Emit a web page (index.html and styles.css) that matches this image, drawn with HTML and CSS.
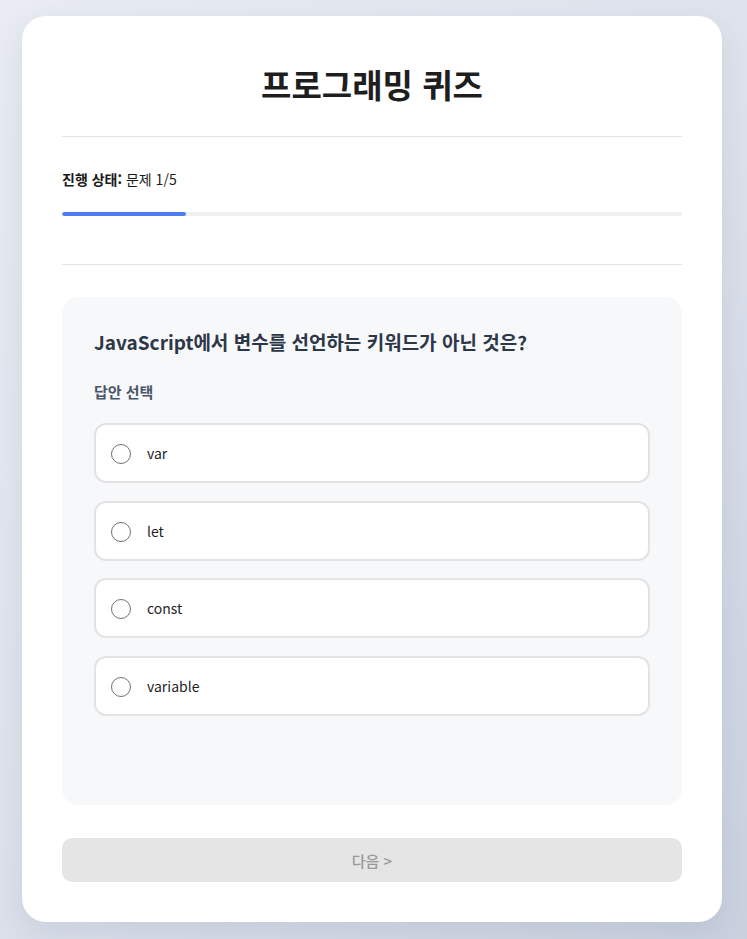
FILE: index.html
```html
<!DOCTYPE html>
<html lang="ko">
<head>
<meta charset="utf-8">
<title>프로그래밍 퀴즈</title>
<link rel="stylesheet" href="styles.css">
</head>
<body>
<main class="card">
  <header class="header">
    <h1 class="title">프로그래밍 퀴즈</h1>
  </header>
  <section class="progress">
    <p class="progress-text"><strong>진행 상태:</strong> 문제 1/5</p>
    <div class="bar"><div class="bar-fill" style="width: 20%"></div></div>
  </section>
  <section class="question">
    <h2 class="question-title">JavaScript에서 변수를 선언하는 키워드가 아닌 것은?</h2>
    <p class="label">답안 선택</p>
    <div class="options">
      <label class="option"><span class="radio"></span><span class="option-text">var</span></label>
      <label class="option"><span class="radio"></span><span class="option-text">let</span></label>
      <label class="option"><span class="radio"></span><span class="option-text">const</span></label>
      <label class="option"><span class="radio"></span><span class="option-text">variable</span></label>
    </div>
  </section>
  <button class="next" disabled>다음 &gt;</button>
</main>
</body>
</html>
```
FILE: styles.css
```css
* { box-sizing: border-box; }
html, body { margin: 0; padding: 0; }
body {
  min-height: 100vh;
  display: flex;
  align-items: center;
  justify-content: center;
  padding-right: 3px;
  padding-bottom: 1px;
  background: linear-gradient(135deg, #e9ecf3 0%, #dde2ec 50%, #c9d1df 100%);
  font-family: "Noto Sans CJK KR", "Noto Sans", sans-serif;
  color: #222;
}
.card {
  width: 700px;
  background: #fff;
  border-radius: 24px;
  padding: 40px 40px 40px;
  box-shadow: 0 10px 30px rgba(60, 70, 100, 0.10);
}
.header {
  padding: 4px 0 28px;
  border-bottom: 1px solid #e4e4e4;
}
.title {
  margin: 0;
  text-align: center;
  font-size: 33px;
  line-height: 48px;
  font-weight: 700;
  color: #1e1e1e;
}
.progress {
  padding: 32px 0 48px;
  border-bottom: 1px solid #e4e4e4;
}
.progress-text {
  margin: 0;
  font-size: 14px;
  line-height: 21px;
  color: #1a1a1a;
}
.progress-text strong { font-weight: 700; }
.bar {
  margin-top: 22px;
  height: 4px;
  background: #f0f0f3;
  border-radius: 2px;
  overflow: hidden;
}
.bar-fill {
  height: 100%;
  background: #4d7ef0;
  border-radius: 2px;
}
.question {
  margin-top: 32px;
  background: #f7f8fa;
  border-radius: 16px;
  padding: 30px 32px 32px;
  min-height: 508px;
}
.question-title {
  margin: 0;
  font-size: 19px;
  line-height: 30px;
  font-weight: 600;
  color: #2d3748;
}
.label {
  margin: 24px 0 0;
  font-size: 15px;
  line-height: 22px;
  font-weight: 600;
  color: #4a5568;
}
.options {
  margin-top: 20px;
  display: flex;
  flex-direction: column;
  gap: 17.5px;
}
.option {
  display: flex;
  align-items: center;
  height: 60px;
  padding: 0 15px;
  background: #fff;
  border: 2px solid #e3e3e3;
  border-radius: 12px;
}
.radio {
  width: 20px;
  height: 20px;
  border: 1px solid #707070;
  border-radius: 50%;
  background: #fff;
  flex: none;
  margin-top: 2px;
}
.option-text {
  margin-left: 16px;
  font-size: 14px;
  color: #1e1e1e;
}
.next {
  display: block;
  width: 100%;
  height: 44px;
  margin-top: 33px;
  border: none;
  border-radius: 10px;
  background: #e5e5e5;
  color: #9a9a9a;
  font-family: inherit;
  font-size: 15px;
  font-weight: 500;
}
```
